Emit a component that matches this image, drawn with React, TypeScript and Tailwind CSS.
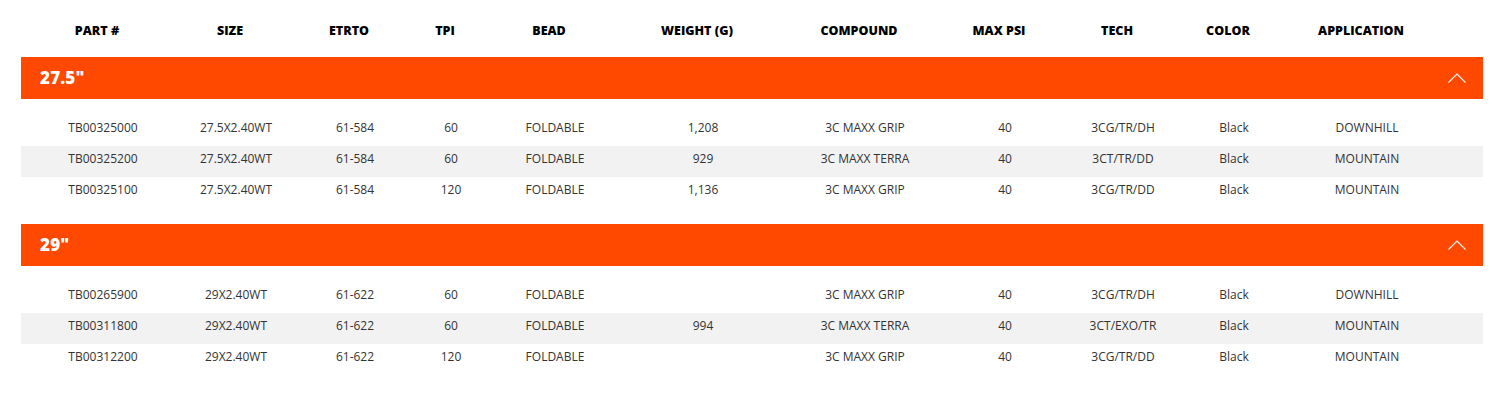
const cols = "grid grid-cols-[164px_102px_136px_56px_152px_144px_180px_100px_136px_86px_180px]";

const headers = ["PART #", "SIZE", "ETRTO", "TPI", "BEAD", "WEIGHT (G)", "COMPOUND", "MAX PSI", "TECH", "COLOR", "APPLICATION"];

const groups = [
  {
    label: '27.5"',
    rows: [
      ["TB00325000", "27.5X2.40WT", "61-584", "60", "FOLDABLE", "1,208", "3C MAXX GRIP", "40", "3CG/TR/DH", "Black", "DOWNHILL"],
      ["TB00325200", "27.5X2.40WT", "61-584", "60", "FOLDABLE", "929", "3C MAXX TERRA", "40", "3CT/TR/DD", "Black", "MOUNTAIN"],
      ["TB00325100", "27.5X2.40WT", "61-584", "120", "FOLDABLE", "1,136", "3C MAXX GRIP", "40", "3CG/TR/DD", "Black", "MOUNTAIN"],
    ],
  },
  {
    label: '29"',
    rows: [
      ["TB00265900", "29X2.40WT", "61-622", "60", "FOLDABLE", "", "3C MAXX GRIP", "40", "3CG/TR/DH", "Black", "DOWNHILL"],
      ["TB00311800", "29X2.40WT", "61-622", "60", "FOLDABLE", "994", "3C MAXX TERRA", "40", "3CT/EXO/TR", "Black", "MOUNTAIN"],
      ["TB00312200", "29X2.40WT", "61-622", "120", "FOLDABLE", "", "3C MAXX GRIP", "40", "3CG/TR/DD", "Black", "MOUNTAIN"],
    ],
  },
];

export default function App() {
  return (
    <div className="w-[1500px] h-[411px] bg-white pl-[21px] pr-[17px] font-['Open_Sans',sans-serif]">
      {/* column headings */}
      <div className={`${cols} h-[57px] items-center`}>
        {headers.map((h) => (
          <div key={h} className="pr-3 pt-[5px] text-center text-[12.5px] font-extrabold text-black">
            {h}
          </div>
        ))}
      </div>

      {groups.map((g) => (
        <div key={g.label} className="pb-4">
          <div className="flex h-[42px] items-center justify-between bg-[#ff4800] pl-[19px] pr-[17px]">
            <span className="text-[17px] font-extrabold text-white tracking-[0.01em]">{g.label}</span>
            <svg width="18" height="10" viewBox="0 0 18 10" fill="none" className="mt-[-1px]">
              <polyline points="0.5,9.5 9,1 17.5,9.5" stroke="white" strokeWidth="1.1" />
            </svg>
          </div>
          <div className="pt-4">
            {g.rows.map((r, i) => (
              <div key={r[0]} className={`${cols} h-[31px] items-center ${i === 1 ? "bg-[#f2f2f2]" : ""}`}>
                {r.map((c, j) => (
                  <div key={j} className="pb-[6px] text-center text-[12px] text-[#333]">
                    {c}
                  </div>
                ))}
              </div>
            ))}
          </div>
        </div>
      ))}
    </div>
  );
}
